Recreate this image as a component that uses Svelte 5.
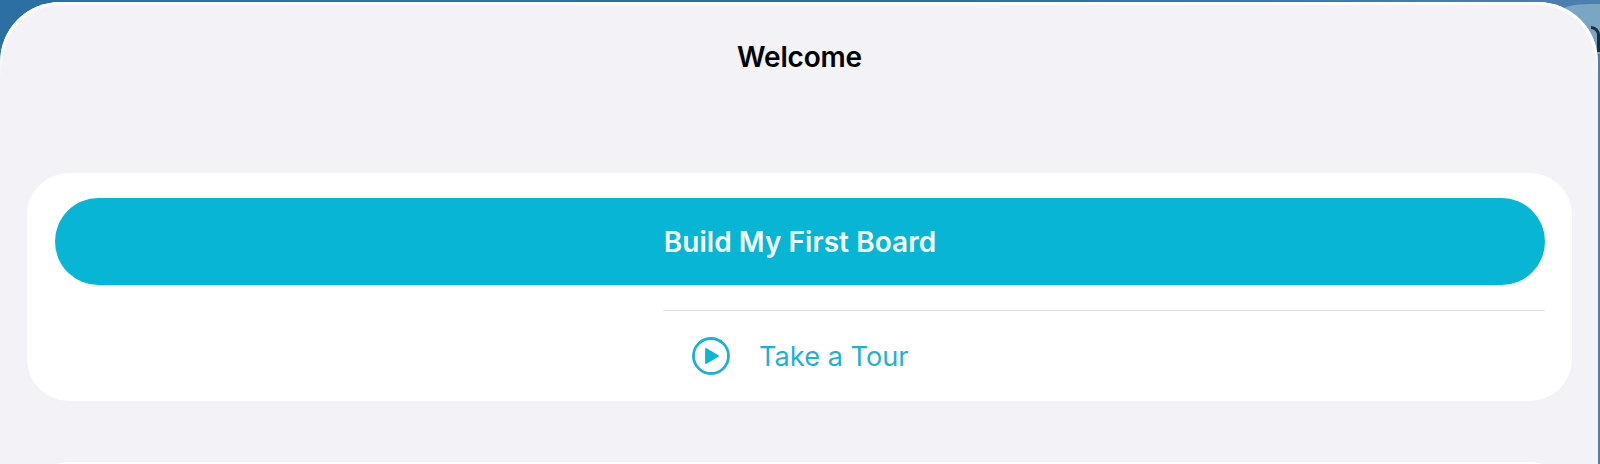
<script>
	let title = "Welcome";
	let primary = "Build My First Board";
	let secondary = "Take a Tour";
</script>

<div class="screen">
	<div class="wallpaper-corner">
		<span class="swoosh"></span>
	</div>
	<div class="sheet">
		<h1 class="title">{title}</h1>

		<section class="card">
			<button class="primary">{primary}</button>
			<div class="tour-wrap">
				<div class="divider"></div>
				<div class="tour">
					<svg class="play" width="40" height="40" viewBox="0 0 40 40" aria-hidden="true">
						<circle cx="20" cy="20" r="17.5" fill="none" stroke="#18b3d2" stroke-width="2.8" />
						<path d="M15 13 L27 20 L15 27 Z" fill="#0ab6d6" stroke="#0ab6d6" stroke-width="1.8" stroke-linejoin="round" />
					</svg>
					<span class="tour-label">{secondary}</span>
				</div>
			</div>
		</section>

		<section class="card next"></section>
	</div>
</div>

<style>
	:global(body) {
		margin: 0;
		background: #2f6fa2;
		overflow: hidden;
	}

	.screen {
		position: relative;
		height: 464px;
		overflow: hidden;
		padding: 2px 2px 0 0;
		box-sizing: border-box;
		background: linear-gradient(90deg, #2c6fa3 0%, #2f6f9f 60%, #4d7fb0 100%);
		font-family: Inter, "Liberation Sans", sans-serif;
	}

	.wallpaper-corner {
		position: absolute;
		top: 4px;
		right: 0;
		width: 40px;
		height: 50px;
		background: #7aa5c3;
		border-top-left-radius: 30px 8px;
	}

	.swoosh {
		position: absolute;
		top: 22px;
		right: 0;
		width: 9px;
		height: 26px;
		border-top: 3px solid #1c2d3c;
		border-right: 3px solid #1c2d3c;
		border-top-right-radius: 10px;
		box-sizing: border-box;
	}

	.sheet {
		position: relative;
		height: 520px;
		box-sizing: border-box;
		background: #f2f2f7;
		border-radius: 60px 60px 0 0;
		padding: 0 26px 0 27px;
	}

	/* light rim along the top edge, fades out down the sides */
	.sheet::before {
		content: "";
		position: absolute;
		top: 0;
		left: 0;
		right: 0;
		height: 80px;
		border-radius: 60px 60px 0 0;
		box-shadow: inset 0 3px 2px -1px #fff, inset 3px 3px 2px -1px #fff, inset -3px 3px 2px -1px #fff;
		mask-image: linear-gradient(#000 50%, transparent);
		pointer-events: none;
	}

	.title {
		margin: 0;
		padding-top: 37px;
		height: 171px;
		box-sizing: border-box;
		font-size: 28px;
		line-height: 36px;
		font-weight: 600;
		color: #000;
		text-align: center;
		letter-spacing: -0.2px;
	}

	.card {
		background: #fff;
		border-radius: 42px;
		padding: 25px 27px 0 28px;
		height: 228px;
		box-sizing: border-box;
	}

	.card.next {
		margin-top: 61px;
	}

	.primary {
		display: block;
		width: 100%;
		height: 87px;
		border: 0;
		padding: 0;
		border-radius: 43.5px;
		background: #08b5d5;
		color: #f4fdff;
		font-family: inherit;
		font-size: 28px;
		font-weight: 600;
		letter-spacing: 0.05px;
	}

	.tour-wrap {
		margin: 25px 0 0 608px;
	}

	.divider {
		height: 1px;
		background: #e1e1e6;
	}

	.tour {
		display: flex;
		align-items: center;
		height: 90px;
		padding-left: 28px;
		gap: 28px;
	}

	.play {
		flex: none;
	}

	.tour-label {
		font-size: 27.2px;
		color: #1eb2d0;
	}
</style>
